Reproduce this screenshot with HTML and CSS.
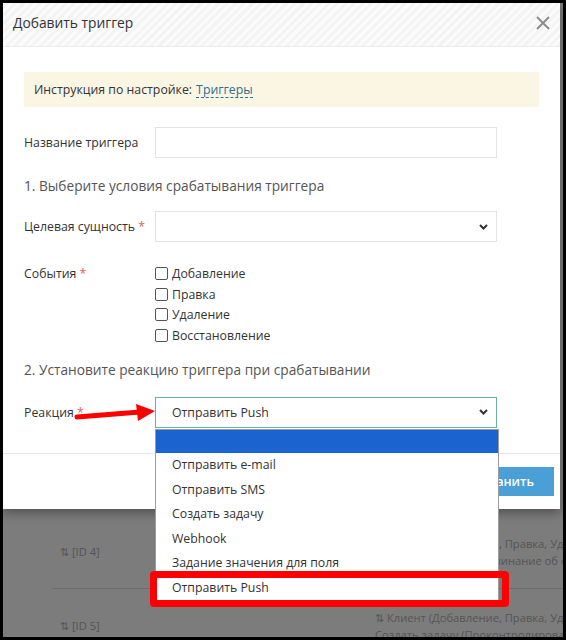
FILE: index.html
```html
<!DOCTYPE html>
<html lang="ru">
  <head>
    <meta charset="UTF-8" />
    <meta name="viewport" content="width=device-width, initial-scale=1.0" />
    <title>Добавить триггер</title>
    <link rel="stylesheet" href="styles.css">
  </head>
  <body>
    <div class="screen">
      <div class="modal">
        <div class="modal-header">
          <span class="modal-title">Добавить триггер</span>
          <svg class="close" width="14" height="14" viewBox="0 0 14 14">
            <path d="M1 1 L13 13 M13 1 L1 13" stroke="#8a8a8a" stroke-width="1.8" fill="none" />
          </svg>
        </div>

        <div class="modal-body">
          <div class="info">Инструкция по настройке: <a href="#" class="link">Триггеры</a></div>

          <div class="form-row">
            <label>Название триггера</label>
            <div class="input"></div>
          </div>

          <div class="section">1. Выберите условия срабатывания триггера</div>

          <div class="form-row">
            <label>Целевая сущность <span class="req">*</span></label>
            <div class="input select">
              <svg class="chevron" width="9" height="6" viewBox="0 0 9 6"><path d="M1 1 L4.5 4.5 L8 1" stroke="#333" stroke-width="2" fill="none" /></svg>
            </div>
          </div>

          <div class="form-row events">
            <label>События <span class="req">*</span></label>
            <div class="checks">
              <div class="check"><span class="box"></span>Добавление</div>
              <div class="check"><span class="box"></span>Правка</div>
              <div class="check"><span class="box"></span>Удаление</div>
              <div class="check"><span class="box"></span>Восстановление</div>
            </div>
          </div>

          <div class="section section-2">2. Установите реакцию триггера при срабатывании</div>

          <div class="form-row">
            <label>Реакция <span class="req">*</span></label>
            <div class="input select focus">
              <span class="value">Отправить Push</span>
              <svg class="chevron" width="9" height="6" viewBox="0 0 9 6"><path d="M1 1 L4.5 4.5 L8 1" stroke="#333" stroke-width="2" fill="none" /></svg>
            </div>
          </div>
        </div>

        <div class="modal-footer">
          <button class="btn-save">Сохранить</button>
        </div>
      </div>

      <div class="bg-list">
        <div class="bg-row">
          <div class="bg-id">⇅ [ID 4]</div>
          <div class="bg-desc">
            <div>⇅ Клиент (Добавление, Правка, Удаление)</div>
            <div>Создать задачу (Напоминание об оплате)</div>
          </div>
        </div>
        <div class="bg-row">
          <div class="bg-id">⇅ [ID 5]</div>
          <div class="bg-desc">
            <div>⇅ Клиент (Добавление, Правка, Удаление)</div>
            <div>Создать задачу (Проконтролировать)</div>
          </div>
        </div>
      </div>

      <!-- открытый список select -->
      <ul class="dropdown">
        <li class="selected"></li>
        <li>Отправить e-mail</li>
        <li>Отправить SMS</li>
        <li>Создать задачу</li>
        <li>Webhook</li>
        <li>Задание значения для поля</li>
        <li>Отправить Push</li>
      </ul>

      <!-- пометки на скриншоте -->
      <div class="mark-box"></div>
      <svg class="mark-arrow" width="84" height="22" viewBox="0 0 84 22">
        <path d="M3 15 L66 10" stroke="#f00" stroke-width="5" stroke-linecap="round" fill="none" />
        <path d="M62 2 L81 9 L64 19 Z" fill="#f00" />
      </svg>
    </div>
  </body>
</html>
```

FILE: styles.css
```css
body {
  margin: 0;
  padding: 0;
  background-color: #000;
  font-family: "Open Sans", "Noto Sans", sans-serif;
  font-size: 12.3px;
  color: #333;
}

.screen {
  position: relative;
  width: 560px;
  height: 634px;
  margin: 3px;
  background-color: #7c7c7c;
  overflow: hidden;
}

.modal {
  background-color: #fff;
  margin-right: 3px;
  height: 506px;
  box-shadow: 0 4px 10px rgba(0, 0, 0, 0.35);
  position: relative;
  z-index: 1;
}

.modal-header {
  box-sizing: border-box;
  height: 44px;
  display: flex;
  align-items: flex-start;
  justify-content: space-between;
  padding: 10px 10px 0 10px;
  background: repeating-linear-gradient(-45deg, #f4f4f4 0, #f4f4f4 3px, #fbfbfb 3px, #fbfbfb 6px);
  border-bottom: 1px solid #ececec;
}

.modal-title {
  font-size: 13.8px;
  color: #333;
}

.close {
  margin-top: 3px;
}

.modal-body {
  padding: 25px 21px 25px 21px;
}

.info {
  height: 35px;
  display: flex;
  align-items: center;
  padding-left: 10px;
  background-color: #fbf6e4;
  margin-bottom: 20px;
}

.link {
  color: #2f6f93;
  text-decoration: none;
  border-bottom: 1px dashed #2f6f93;
  margin-left: 4px;
  line-height: 15px;
}

.form-row {
  display: grid;
  grid-template-columns: 131px 342px;
  align-items: center;
}

.input {
  height: 29px;
  border: 1px solid #e3e3e3;
  background-color: #fff;
}

.select {
  display: flex;
  align-items: center;
  justify-content: space-between;
  padding: 0 8px 0 16px;
}

.select.focus {
  border-color: #6aaea4;
}

.chevron {
  margin-left: auto;
}

.value {
  color: #333;
}

.req {
  color: #e26060;
}

.section {
  font-size: 13.7px;
  color: #555;
  line-height: 20px;
  margin: 18px 0 15px 0;
}

.section-2 {
  margin: 14px 0 17px 0;
}

.events {
  align-items: start;
  margin-top: 21px;
}

.events label {
  line-height: 22px;
}

.checks {
  display: flex;
  flex-direction: column;
}

.check {
  display: flex;
  align-items: center;
  height: 20.7px;
}

.box {
  width: 11px;
  height: 11px;
  border: 1px solid #555;
  border-radius: 2px;
  margin-right: 4px;
  background: #fff;
}

.modal-footer {
  border-top: 1px solid #e8e8e8;
  display: flex;
  justify-content: flex-end;
  padding: 13px 6px 0 0;
}

.btn-save {
  height: 29px;
  padding: 0 20px;
  border: none;
  background-color: #4a9fd6;
  color: #fff;
  font-family: inherit;
  font-size: 12.5px;
  font-weight: 600;
}

.bg-list {
  padding-left: 49px;
  color: #555;
  font-size: 11.2px;
}

.bg-row {
  box-sizing: border-box;
  height: 74px;
  display: flex;
  align-items: center;
  border-bottom: 1px solid #6c6c6c;
}

.bg-row:first-child {
  height: 80px;
  padding-top: 6px;
}

.bg-id {
  width: 315px;
  padding-left: 8px;
  flex-shrink: 0;
}

.bg-desc {
  white-space: nowrap;
  line-height: 17px;
}

.dropdown {
  position: absolute;
  left: 152px;
  top: 426px;
  width: 342px;
  margin: 0;
  padding: 0;
  list-style: none;
  background-color: #fff;
  border: 1px solid #9c9c9c;
  z-index: 2;
}

.dropdown li {
  height: 24.6px;
  line-height: 24.6px;
  padding-left: 16px;
  color: #333;
}

.dropdown li.selected {
  background-color: #1b64cf;
  height: 23px;
}

.mark-box {
  position: absolute;
  left: 147px;
  top: 568px;
  width: 345px;
  height: 22px;
  border: 7px solid #f00;
  border-radius: 4px;
  z-index: 3;
}

.mark-arrow {
  position: absolute;
  left: 71px;
  top: 399px;
  z-index: 3;
}
```
